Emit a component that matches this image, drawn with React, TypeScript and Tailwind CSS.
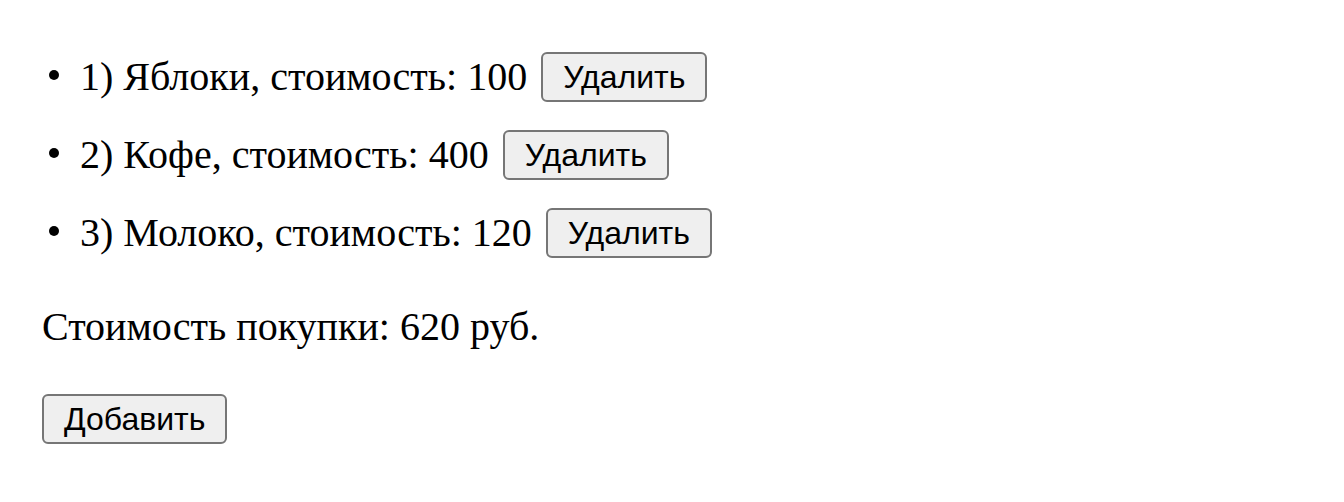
import React from "react";

const items = [
  { n: 1, name: "Яблоки", price: 100 },
  { n: 2, name: "Кофе", price: 400 },
  { n: 3, name: "Молоко", price: 120 },
];

function Btn({ children }: { children: React.ReactNode }) {
  return (
    <button className="h-[50px] shrink-0 px-[20px] border-2 border-[#767676] rounded-[6px] bg-[#efefef] text-black text-[32px] leading-none font-['Liberation_Sans',Arial,sans-serif]">
      {children}
    </button>
  );
}

export default function App() {
  return (
    <div className="bg-white min-h-[502px] pl-[42px] pt-[52px] text-black font-['Liberation_Serif','Times_New_Roman',serif] text-[40px]">
      <ul className="flex flex-col gap-[28px]">
        {items.map((it) => (
          <li key={it.n} className="flex items-center h-[50px]">
            <span className="shrink-0 w-[10px] h-[10px] ml-[7px] mr-[21px] mb-[4px] rounded-full bg-black" />
            <span className="mr-[14px] whitespace-nowrap">
              {it.n}) {it.name}, стоимость: {it.price}
            </span>
            <Btn>Удалить</Btn>
          </li>
        ))}
      </ul>
      <p className="mt-[46px] leading-[46px]">Стоимость покупки: 620 руб.</p>
      <div className="mt-[44px] flex">
        <Btn>Добавить</Btn>
      </div>
    </div>
  );
}
